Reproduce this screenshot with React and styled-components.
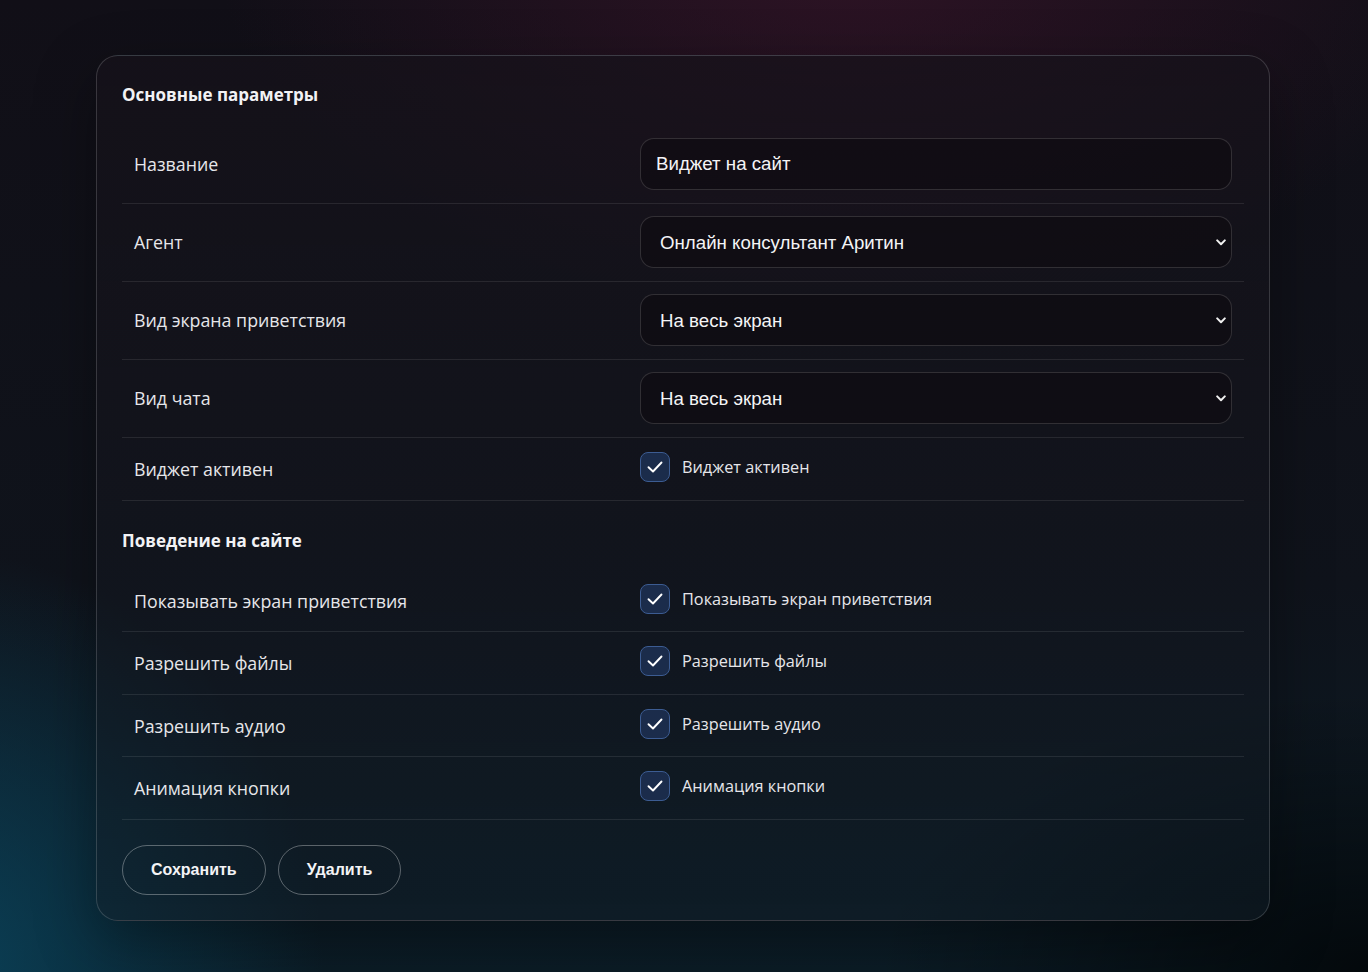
import React from "react";
import styled, { createGlobalStyle } from "styled-components";

const GlobalStyle = createGlobalStyle`
    html, body {
        margin: 0;
        padding: 0;
        min-height: 100%;
    }
    body {
        background: #0e0f15;
        font-family: "Open Sans", "Noto Sans", sans-serif;
        color: #e8e8ec;
    }
`;

const Page = styled.div`
    min-height: 972px;
    box-sizing: border-box;
    padding: 55px 96px 50px;
    background:
        radial-gradient(ellipse 900px 520px at 62% -5%, rgba(70, 22, 48, 0.55), transparent 70%),
        radial-gradient(ellipse 540px 600px at -4% 100%, rgba(10, 70, 95, 0.85), transparent 70%),
        radial-gradient(ellipse 700px 400px at 100% 100%, rgba(0, 0, 0, 0.7), transparent 70%),
        linear-gradient(180deg, #110f17 0%, #0f131b 60%, #0b1c26 100%);
`;

const Card = styled.div`
    box-sizing: border-box;
    width: 1174px;
    border: 1px solid rgba(255, 255, 255, 0.16);
    border-radius: 22px;
    padding: 25px 25px 25px;
    background: linear-gradient(180deg, rgba(22, 18, 26, 0.7) 0%, rgba(20, 22, 30, 0.55) 55%, rgba(17, 30, 40, 0.5) 100%);
    box-shadow: 0 20px 60px rgba(0, 0, 0, 0.35);
`;

const SectionTitle = styled.h2`
    margin: ${p => p.$top}px 0 ${p => p.$bottom}px;
    font-size: 17px;
    line-height: 28px;
    font-weight: 700;
    color: #f2f2f5;
`;

const Row = styled.div`
    display: grid;
    grid-template-columns: 518px 1fr;
    align-items: ${p => (p.$check ? "start" : "center")};
    padding: ${p => (p.$check ? "14px 12px 17.5px 0" : "12px 12px 13px 0")};
    border-bottom: 1px solid rgba(255, 255, 255, 0.09);
`;

const Label = styled.div`
    padding-left: 12px;
    font-size: 17.8px;
    line-height: 24px;
    color: #e6e6ea;
    margin-top: ${p => (p.$check ? "5px" : "0")};
`;

const fieldBase = `
    box-sizing: border-box;
    width: 100%;
    height: 52px;
    border: 1px solid rgba(255, 255, 255, 0.14);
    border-radius: 14px;
    background: rgba(12, 10, 14, 0.55);
    color: #f4f4f6;
    font-family: "Liberation Sans", Arial, sans-serif;
    font-size: 18.7px;
    outline: none;
`;

const TextInput = styled.input`
    ${fieldBase}
    padding: 0 15px;
`;

const SelectWrap = styled.div`
    position: relative;
`;

const Select = styled.select`
    ${fieldBase}
    appearance: none;
    padding: 0 40px 0 19px;
`;

const Chevron = styled.svg`
    position: absolute;
    right: 6px;
    top: 50%;
    margin-top: -3px;
    pointer-events: none;
`;

const CheckLine = styled.label`
    display: flex;
    align-items: center;
    gap: 12px;
    font-size: 16.3px;
    color: #e6e6ea;
`;

const Box = styled.span`
    box-sizing: border-box;
    width: 30px;
    height: 30px;
    border-radius: 8px;
    border: 1px solid #3c5c92;
    background: #1b2c4b;
    display: flex;
    align-items: center;
    justify-content: center;
`;

const Actions = styled.div`
    display: flex;
    gap: 12px;
    margin-top: 25px;
`;

const Button = styled.button`
    height: 50px;
    padding: 0 28px;
    border-radius: 25px;
    border: 1px solid rgba(255, 255, 255, 0.32);
    background: transparent;
    color: #f4f4f6;
    font-family: "Liberation Sans", Arial, sans-serif;
    font-weight: 700;
    font-size: 16px;
    cursor: pointer;
`;

const ChevronIcon = () => (
    <Chevron width="10" height="7" viewBox="0 0 10 7">
        <path d="M1.2 1.4 L5 5.2 L8.8 1.4" fill="none" stroke="#f0f0f0" strokeWidth="2" strokeLinecap="round" strokeLinejoin="round" />
    </Chevron>
);

const SelectField = ({ value }) => (
    <SelectWrap>
        <Select defaultValue={value}>
            <option>{value}</option>
        </Select>
        <ChevronIcon />
    </SelectWrap>
);

const Check = ({ text }) => (
    <CheckLine>
        <Box>
            <svg width="18" height="14" viewBox="0 0 18 14">
                <path d="M2.5 7.2 L7 11.5 L15.5 2.5" fill="none" stroke="#ffffff" strokeWidth="1.9" strokeLinecap="round" strokeLinejoin="round" />
            </svg>
        </Box>
        {text}
    </CheckLine>
);

const behaviour = ["Показывать экран приветствия", "Разрешить файлы", "Разрешить аудио", "Анимация кнопки"];

export default function App() {
    return (
        <Page>
            <GlobalStyle />
            <Card>
                <SectionTitle $top={0} $bottom={17}>Основные параметры</SectionTitle>
                <Row>
                    <Label>Название</Label>
                    <TextInput defaultValue="Виджет на сайт" />
                </Row>
                <Row>
                    <Label>Агент</Label>
                    <SelectField value="Онлайн консультант Аритин" />
                </Row>
                <Row>
                    <Label>Вид экрана приветствия</Label>
                    <SelectField value="На весь экран" />
                </Row>
                <Row>
                    <Label>Вид чата</Label>
                    <SelectField value="На весь экран" />
                </Row>
                <Row $check>
                    <Label $check>Виджет активен</Label>
                    <Check text="Виджет активен" />
                </Row>

                <SectionTitle $top={26} $bottom={15}>Поведение на сайте</SectionTitle>
                {behaviour.map(t => (
                    <Row $check key={t}>
                        <Label $check>{t}</Label>
                        <Check text={t} />
                    </Row>
                ))}

                <Actions>
                    <Button>Сохранить</Button>
                    <Button>Удалить</Button>
                </Actions>
            </Card>
        </Page>
    );
}
